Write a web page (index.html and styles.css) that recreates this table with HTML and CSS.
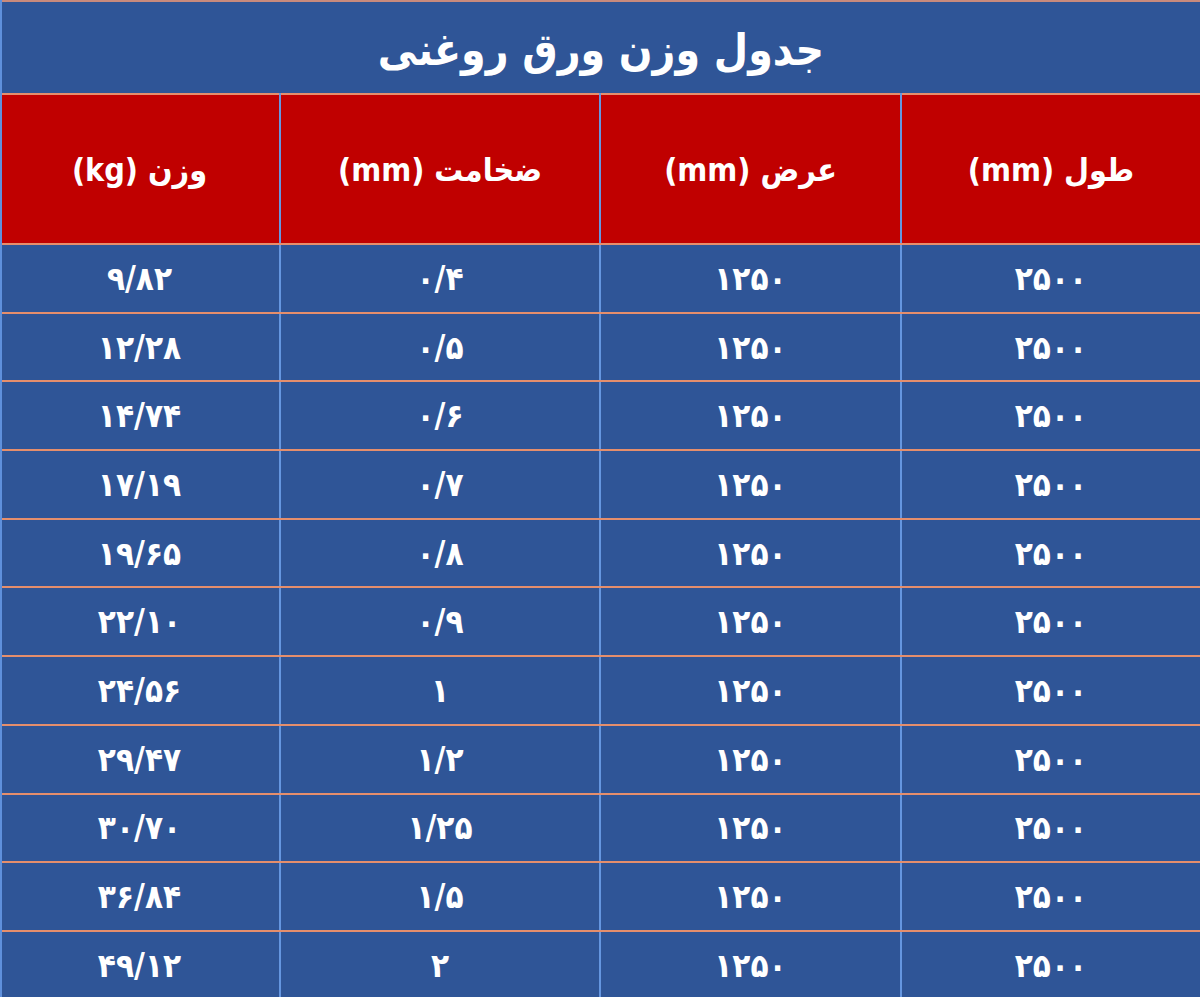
FILE: index.html
```html
<!DOCTYPE html>
<html lang="fa" dir="rtl">
<head>
<meta charset="utf-8">
<link rel="stylesheet" href="styles.css">
</head>
<body>
<div class="sheet">
  <div class="title">جدول وزن ورق روغنی</div>
  <table class="grid">
    <colgroup>
      <col class="c1"><col class="c2"><col class="c3"><col class="c4">
    </colgroup>
    <thead>
      <tr><th>طول (mm)</th><th>عرض (mm)</th><th>ضخامت (mm)</th><th>وزن (kg)</th></tr>
    </thead>
    <tbody>
      <tr><td>۲۵۰۰</td><td>۱۲۵۰</td><td>۰/۴</td><td>۹/۸۲</td></tr>
      <tr><td>۲۵۰۰</td><td>۱۲۵۰</td><td>۰/۵</td><td>۱۲/۲۸</td></tr>
      <tr><td>۲۵۰۰</td><td>۱۲۵۰</td><td>۰/۶</td><td>۱۴/۷۴</td></tr>
      <tr><td>۲۵۰۰</td><td>۱۲۵۰</td><td>۰/۷</td><td>۱۷/۱۹</td></tr>
      <tr><td>۲۵۰۰</td><td>۱۲۵۰</td><td>۰/۸</td><td>۱۹/۶۵</td></tr>
      <tr><td>۲۵۰۰</td><td>۱۲۵۰</td><td>۰/۹</td><td>۲۲/۱۰</td></tr>
      <tr><td>۲۵۰۰</td><td>۱۲۵۰</td><td>۱</td><td>۲۴/۵۶</td></tr>
      <tr><td>۲۵۰۰</td><td>۱۲۵۰</td><td>۱/۲</td><td>۲۹/۴۷</td></tr>
      <tr><td>۲۵۰۰</td><td>۱۲۵۰</td><td>۱/۲۵</td><td>۳۰/۷۰</td></tr>
      <tr><td>۲۵۰۰</td><td>۱۲۵۰</td><td>۱/۵</td><td>۳۶/۸۴</td></tr>
      <tr><td>۲۵۰۰</td><td>۱۲۵۰</td><td>۲</td><td>۴۹/۱۲</td></tr>
    </tbody>
  </table>
</div>
</body>
</html>
```
FILE: styles.css
```css
html, body {
  margin: 0;
  padding: 0;
  background: #2f5597;
}
.sheet {
  width: 1200px;
  height: 997px;
  overflow: hidden;
  background: #2f5597;
  font-family: "DejaVu Sans Condensed", "DejaVu Sans", sans-serif;
  color: #ffffff;
  border-left: 2px solid #5f90dc;
  box-sizing: border-box;
}
.title {
  height: 93px;
  box-sizing: border-box;
  border-top: 2px solid #c98a7c;
  display: flex;
  align-items: center;
  justify-content: center;
  font-size: 44px;
  font-weight: bold;
  padding-top: 4px;
}
.grid {
  width: 100%;
  border-collapse: collapse;
  table-layout: fixed;
}
.c1 { width: 299px; }
.c2 { width: 301px; }
.c3 { width: 320px; }
.c4 { width: 280px; }
.grid th, .grid td {
  text-align: center;
  vertical-align: middle;
  border-top: 2px solid #e58e6c;
  border-bottom: 2px solid #e58e6c;
  border-left: 2px solid #6596e0;
  padding: 0;
}
.grid th:last-child, .grid td:last-child {
  border-left: none;
}
.grid th {
  background: #c00000;
  height: 146px;
  font-size: 32px;
  font-weight: bold;
  padding-top: 2px;
}
.grid td {
  height: 66.7px;
  font-size: 33px;
  font-weight: bold;
}
```
